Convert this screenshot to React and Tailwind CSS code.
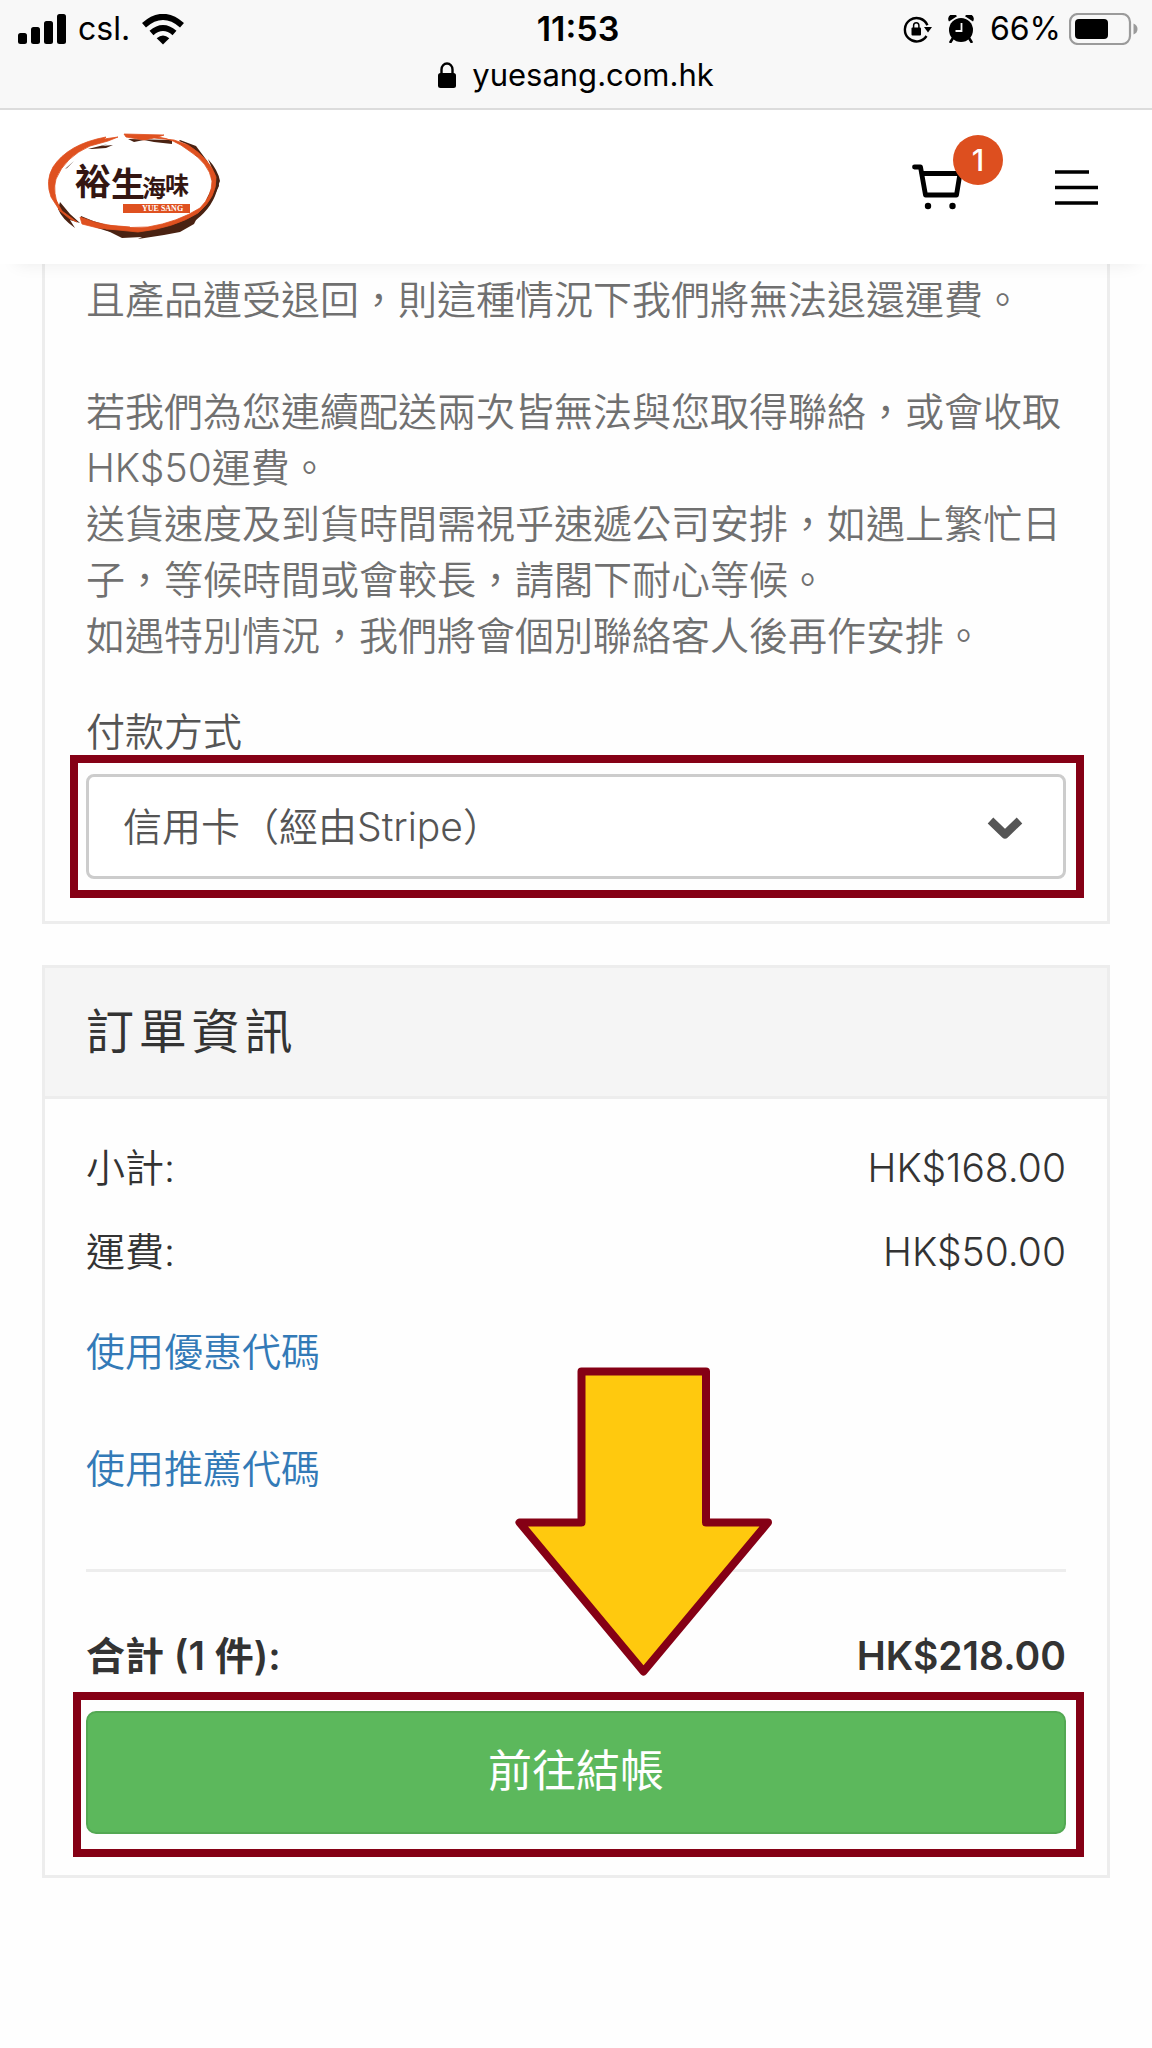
import React from "react";

const notices = [
  "且產品遭受退回，則這種情況下我們將無法退還運費。",
  "",
  "若我們為您連續配送兩次皆無法與您取得聯絡，或會收取HK$50運費。",
  "送貨速度及到貨時間需視乎速遞公司安排，如遇上繁忙日子，等候時間或會較長，請閣下耐心等候。",
  "如遇特別情況，我們將會個別聯絡客人後再作安排。",
];

function SignalIcon() {
  return (
    <svg width="48" height="30" viewBox="0 0 48 30" aria-hidden="true">
      <rect x="0" y="19" width="9" height="11" rx="2.5" />
      <rect x="13" y="13" width="9" height="17" rx="2.5" />
      <rect x="26" y="7" width="9" height="23" rx="2.5" />
      <rect x="39" y="0" width="9" height="30" rx="2.5" />
    </svg>
  );
}

function WifiIcon() {
  return (
    <svg width="42" height="31" viewBox="0 0 42 31" aria-hidden="true">
      <path d="M21 30.500 L14.700 24.200 Q21 18.800 27.300 24.200 Z" />
      <path d="M9.500 19 Q21 9 32.500 19" fill="none" stroke="#000" strokeWidth="6" />
      <path d="M2 11.200 Q21 -5.400 40 11.200" fill="none" stroke="#000" strokeWidth="6" />
    </svg>
  );
}

function LockIcon() {
  return (
    <svg width="18" height="26" viewBox="0 0 18 26" aria-hidden="true">
      <rect x="0" y="11" width="18" height="15" rx="2.500" />
      <path d="M3.500 12 V7.500 a5.500 6 0 0 1 11 0 V12" fill="none" stroke="#000" strokeWidth="2.400" />
    </svg>
  );
}

function RotationLockIcon() {
  return (
    <svg width="29" height="27" viewBox="0 0 29 27" aria-hidden="true">
      <path d="M24.400 9.200 A11.700 11.700 0 1 0 23.500 20" fill="none" stroke="#000" strokeWidth="2.400" />
      <path d="M21 11 H29 L25 16.500 Z" />
      <rect x="8.500" y="11.500" width="9.500" height="8" rx="1" />
      <path d="M10.600 12 V9.500 a2.650 2.800 0 0 1 5.300 0 V12" fill="none" stroke="#000" strokeWidth="1.500" />
    </svg>
  );
}

function AlarmIcon() {
  return (
    <svg width="26" height="28" viewBox="0 0 26 28" aria-hidden="true">
      <circle cx="13" cy="15" r="12" />
      <path d="M1 6.600 A4.300 4.300 0 0 1 9 1.300 Z M25 6.600 A4.300 4.300 0 0 0 17 1.300 Z" />
      <path d="M5 23 L2.500 27 M21 23 L23.500 27" stroke="#000" strokeWidth="2.600" strokeLinecap="round" />
      <path d="M13.500 8 V16 H7.500" fill="none" stroke="#f8f8f8" strokeWidth="1.800" />
    </svg>
  );
}

function BatteryIcon() {
  return (
    <svg width="69" height="32" viewBox="0 0 69 32" aria-hidden="true">
      <rect x="1" y="1" width="60" height="30" rx="8" fill="none" stroke="#9b9b9b" strokeWidth="2.200" />
      <rect x="6" y="6" width="33" height="20" rx="4" />
      <path d="M64.500 10.500 Q68.500 12 68.500 16 Q68.500 20 64.500 21.500 Z" fill="#9b9b9b" />
    </svg>
  );
}

function Logo() {
  return (
    <svg width="176" height="110" viewBox="0 0 176 110" role="img" aria-label="裕生海味 YUE SANG">
      <g fill="#4a2212">
        <path d="M12 77 Q16 87 29 96 L24 88 L34 91 L24 82 L14 70 Z" />
        <path d="M35 88 Q52 98 70 101 L92 104 Q124 101 150 88 Q168 74 172 54 L174 49 Q172 38 162 27 L170 46 Q167 66 150 80 Q124 94 92 97 Q60 96 35 84 Z" />
        <path d="M60 98 L76 106 L96 105 L92 107 L118 103 L134 100 L148 92 L152 84 L120 95 L90 100 Z" />
        <path d="M42 17 L62 12 L56 14 L67 13 L60 16 L46 17 Z M82 7 L126 8 L126 12 L108 10 L98 8 L88 10 Z M133 9 L140 12 L150 24 L162 30 L150 14 L134 8 Z" />
        <path d="M163 34 L172 43 L173 54 L170 60 L158 79 L161 66 L167 54 Z M19 37 L28 29 L21 36 Z" />
      </g>
      <g fill="#df5120" stroke="#df5120" strokeWidth="0.800" strokeLinejoin="round">
        <path d="M60 5 Q22 12 7 35 Q-1 49 5 65 L14 79 Q6 60 10 47 Q19 25 44 14 L62 9 L72 5 L58 7 Z" />
        <path d="M78 2 L118 3 L112 5 Q128 7 142 18 Q163 31 166 49 Q166 64 154 76 Q132 90 102 95 Q66 98 34 85 L36 92 L52 96 L92 100 Q128 96 152 81 Q171 65 170 45 Q164 27 142 13 L128 8 L108 6 L98 8 L80 5 Z" />
        <path d="M10 68 L16 79 L31 90 L24 87 L14 79 Z M60 93 L84 95 L84 97 L60 97 Z" />
      </g>
      <g fill="#341612" fontFamily='"Noto Sans CJK TC", sans-serif' fontWeight="700">
        <text x="29" y="63" fontSize="36">裕</text>
        <text x="65" y="65" fontSize="34">生</text>
        <text x="96" y="65" fontSize="24">海</text>
        <text x="119" y="62" fontSize="24">味</text>
      </g>
      <rect x="77" y="72" width="67" height="9" fill="#df5120" />
      <text x="96" y="79" fontSize="8" fontWeight="700" fill="#fff" fontFamily='"Liberation Serif", serif'>
        YUE SANG
      </text>
    </svg>
  );
}

function CartIcon() {
  return (
    <svg width="52" height="46" viewBox="0 0 52 46" aria-hidden="true">
      <path d="M2.500 3 H8.500 L13.500 31 H44.500 L48 9.500 H9.500" fill="none" stroke="#000" strokeWidth="4.800" strokeLinecap="round" strokeLinejoin="round" />
      <circle cx="16" cy="42" r="3.200" />
      <circle cx="40.500" cy="42" r="3.200" />
    </svg>
  );
}

function MenuIcon() {
  return (
    <svg width="44" height="36" viewBox="0 0 44 36" aria-hidden="true">
      <path d="M0 3 H34 M0 18.500 H43 M0 34 H43" fill="none" stroke="#000" strokeWidth="3.600" />
    </svg>
  );
}

function StatusBar() {
  return (
    <div className="border-b-2 border-[#dcdcdc] bg-[#f8f8f8] text-[32px] leading-10 text-black">
      <div className="grid grid-cols-3 items-center pt-[9px] pr-[14px] pl-[18px]">
        <div className="flex items-center gap-3">
          <SignalIcon />
          <span>csl.</span>
          <WifiIcon />
        </div>
        <div className="text-center text-[34px] leading-10 font-semibold">11:53</div>
        <div className="flex items-center justify-end gap-2">
          <div className="flex items-center gap-4">
            <RotationLockIcon />
            <AlarmIcon />
            <span>66%</span>
          </div>
          <BatteryIcon />
        </div>
      </div>
      <div className="flex items-center justify-center gap-4 pt-[6px] pb-[13px] text-[31px]">
        <LockIcon />
        <span>yuesang.com.hk</span>
      </div>
    </div>
  );
}

function SiteHeader() {
  return (
    <header className="relative z-10 flex items-center justify-between bg-white px-[46px] py-[22px] shadow-[0_16px_16px_-16px_rgba(0,0,0,0.08)]">
      <a href="#home">
        <Logo />
      </a>
      <div className="flex items-center">
        <a href="#cart" className="relative mr-[91px] block" aria-label="1">
          <CartIcon />
          <span className="absolute -top-[29px] left-[41px] flex size-[50px] items-center justify-center rounded-full bg-[#dd4f1f] text-[30px] leading-none font-medium text-white">
            1
          </span>
        </a>
        <button type="button" className="mr-[7px] block" aria-label="Menu">
          <MenuIcon />
        </button>
      </div>
    </header>
  );
}

function AmountRow({ label, value }) {
  return (
    <div className="flex items-center justify-between">
      <dt>{label}</dt>
      <dd>{value}</dd>
    </div>
  );
}

function DownArrow() {
  return (
    <svg className="pointer-events-none absolute bottom-[198px] left-[470px]" width="258" height="310" viewBox="0 0 258 310" aria-hidden="true">
      <path d="M66.500 4.500 H191 V155.500 H253 L128.500 304.500 L4.500 155.500 H66.500 Z" fill="#ffc90e" stroke="#850015" strokeWidth="8" strokeLinejoin="round" />
    </svg>
  );
}

export default function App() {
  return (
    <div className="min-h-screen bg-[#fefefe] font-['Inter','Noto_Sans_CJK_TC',sans-serif]" lang="zh-Hant">
      <StatusBar />
      <SiteHeader />
      <main className="px-[42px] text-[39px] leading-[56px] font-[350]">
        <section className="border-x-[3px] border-b-[3px] border-[#ededed] px-[41px] pt-2 pb-[23px]">
          <div className="text-[#707070]">
            {notices.map((line, i) => (
              <p key={i} className="min-h-14">
                {line}
              </p>
            ))}
          </div>
          <label htmlFor="payment" className="mt-[45px] block leading-[46px] text-[#555555]">
            付款方式
          </label>
          <div className="-mr-[18px] -ml-4 border-8 border-[#850015] py-[11px] pr-[10px] pl-2">
            <div className="relative">
              <select id="payment" className="block h-[105px] w-full appearance-none rounded-lg border-[3px] border-[#cccccc] bg-white pr-24 pl-[34px] text-[#555555]">
                <option>信用卡（經由Stripe）</option>
              </select>
              <svg className="pointer-events-none absolute top-[42px] right-[43px]" width="36" height="24" viewBox="0 0 36 24" aria-hidden="true">
                <path d="M3.500 4.500 L18 18.500 L32.500 4.500" fill="none" stroke="#555555" strokeWidth="8" strokeLinejoin="round" />
              </svg>
            </div>
          </div>
        </section>

        <section className="relative mt-[41px] border-[3px] border-[#ededed] text-[#333333]">
          <h2 className="border-b-[3px] border-[#ededed] bg-[#f5f5f5] px-[41px] py-8 text-5xl leading-[64px] font-normal tracking-widest">
            訂單資訊
          </h2>
          <div className="px-[41px] pt-[41px] pb-[18px]">
            <dl className="flex flex-col gap-7">
              <AmountRow label="小計:" value="HK$168.00" />
              <AmountRow label="運費:" value="HK$50.00" />
            </dl>
            <div className="mt-11 flex flex-col items-start gap-[61px] text-[#337ab7]">
              <a href="#coupon">使用優惠代碼</a>
              <a href="#referral">使用推薦代碼</a>
            </div>
            <hr className="mt-[72px] border-t-[3px] border-[#ededed]" />
            <dl className="mt-14 font-semibold">
              <AmountRow label="合計 (1 件):" value="HK$218.00" />
            </dl>
            <div className="mt-2 -mr-[18px] -ml-[13px] border-8 border-[#850015] pt-[11px] pr-[10px] pb-[15px] pl-[5px]">
              <button type="button" className="block h-[123px] w-full rounded-[10px] border-2 border-[#53a853] bg-[#5cb85c] pb-1 text-[44px] font-normal text-white">
                前往結帳
              </button>
            </div>
          </div>
          <DownArrow />
        </section>
      </main>
    </div>
  );
}
